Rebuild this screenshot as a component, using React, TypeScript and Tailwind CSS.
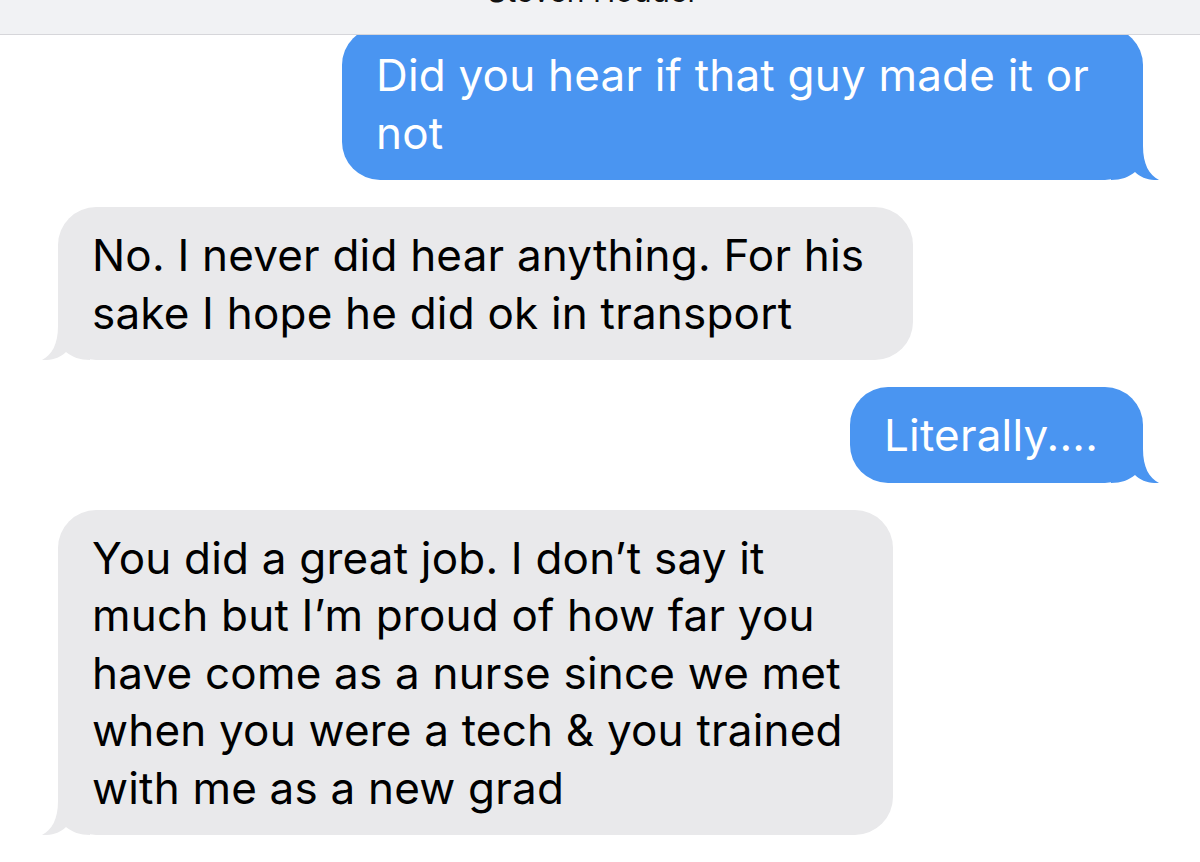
import React from 'react';

type Message = {
    id: number;
    fromMe: boolean;
    lines: string[];
    width: string;
};

const messages: Message[] = [
    { id: 1, fromMe: true, lines: ['Did you hear if that guy made it or', 'not'], width: 'w-[801px]' },
    {
        id: 2,
        fromMe: false,
        lines: ['No. I never did hear anything. For his', 'sake I hope he did ok in transport'],
        width: 'w-[855px]',
    },
    { id: 3, fromMe: true, lines: ['Literally....'], width: 'w-[293px]' },
    {
        id: 4,
        fromMe: false,
        lines: [
            'You did a great job. I don’t say it',
            'much but I’m proud of how far you',
            'have come as a nurse since we met',
            'when you were a tech & you trained',
            'with me as a new grad',
        ],
        width: 'w-[835px]',
    },
];

// Curled tail at the bottom corner of a bubble
const Tail: React.FC<{ fromMe: boolean }> = ({ fromMe }) =>
    fromMe ? (
        <svg className="absolute bottom-0 right-[-16px] w-12 h-12" viewBox="0 0 48 48" fill="#4a95f1">
            <path d="M0 0 H32 V14 C32 32 38 43 48 48 C38 48.5 30 46 24 40 C18 45 10 48 0 48 Z" />
        </svg>
    ) : (
        <svg className="absolute bottom-0 left-[-16px] w-12 h-12" viewBox="0 0 48 48" fill="#e9e9eb">
            <path d="M48 0 H16 V14 C16 32 10 43 0 48 C10 48.5 18 46 24 40 C30 45 38 48 48 48 Z" />
        </svg>
    );

const Bubble: React.FC<{ message: Message }> = ({ message }) => (
    <div className={`flex ${message.fromMe ? 'justify-end pr-[57px]' : 'justify-start pl-[58px]'}`}>
        <div
            className={`relative ${message.width} rounded-[38px] pl-[34px] pt-[20px] pb-[18px] text-[44px] leading-[57.5px] tracking-[0.2px] ${
                message.fromMe ? 'bg-[#4a95f1] text-white' : 'bg-[#e9e9eb] text-black'
            }`}
        >
            {message.lines.map((line, i) => (
                <div key={i} className="relative z-10 whitespace-nowrap">
                    {line}
                </div>
            ))}
            <Tail fromMe={message.fromMe} />
        </div>
    </div>
);

const App: React.FC = () => {
    return (
        <div className="relative h-[862px] w-full overflow-hidden bg-white font-['Inter','Liberation_Sans',sans-serif]">
            <header className="absolute inset-x-0 top-0 z-20 h-[35px] overflow-hidden border-b border-[#d6d6da] bg-[#f1f2f4]">
                <div className="mt-[-24px] flex items-center justify-center gap-3 pl-2">
                    <span className="text-[30px] leading-none text-[#111]">Steven Hodder</span>
                    <span className="text-[26px] leading-none text-[#c4c4c8]">›</span>
                </div>
            </header>

            <main className="flex flex-col gap-[27px] pt-[27px]">
                {messages.map((m) => (
                    <Bubble key={m.id} message={m} />
                ))}
            </main>
        </div>
    );
};

export default App;
